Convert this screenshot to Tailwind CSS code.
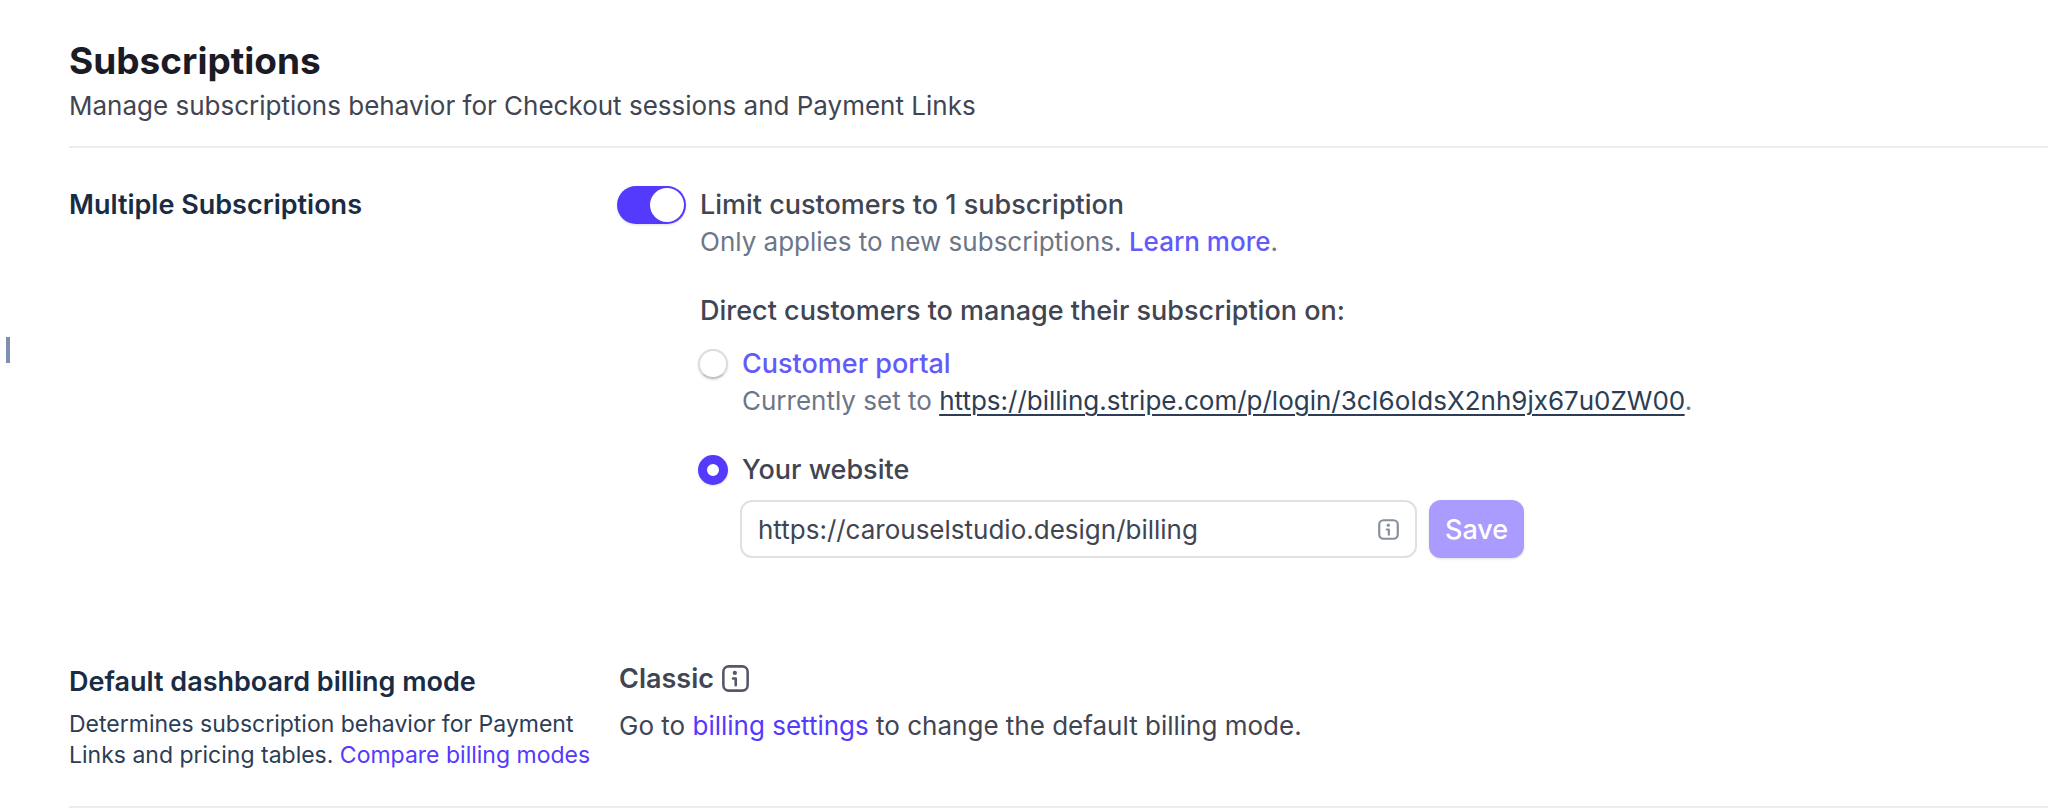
<!DOCTYPE html>
<html lang="en">
<head>
    <meta charset="UTF-8">
    <meta name="viewport" content="width=device-width, initial-scale=1.0">
    <title>Subscriptions</title>
    <script src="https://cdn.jsdelivr.net/npm/@tailwindcss/browser@4"></script>
</head>
<body class="bg-white font-['Inter',sans-serif] text-[27px] leading-[37px] text-[#414552]">
    <!-- Sidebar drag handle -->
    <div class="absolute left-1.5 top-[337px] h-[26px] w-1 bg-[#7f8fad]"></div>

    <main class="pl-[69px] pt-9">
        <header class="border-b-2 border-[#ebeef1] pb-[22px]">
            <h1 class="text-[37px] leading-[50px] font-bold text-[#1a1b25]">Subscriptions</h1>
            <p class="mt-px text-[26px]">Manage subscriptions behavior for Checkout sessions and Payment Links</p>
        </header>

        <section class="flex pt-[38px]">
            <h2 class="w-[548px] shrink-0 font-semibold text-[#1a2c44]">Multiple Subscriptions</h2>
            <div class="flex gap-[14px]">
                <input type="checkbox" id="limit" checked class="flex h-[38px] w-[69px] shrink-0 cursor-pointer appearance-none items-center rounded-full bg-[#c0c8d2] px-[2px] shadow-sm before:size-[34px] before:rounded-full before:bg-white before:content-[''] checked:justify-end checked:bg-[#533afd]">
                <div>
                    <label for="limit" class="block font-medium">Limit customers to 1 subscription</label>
                    <p class="text-[26px] text-[#6c7688]">Only applies to new subscriptions. <a href="#" class="font-medium text-[#625afa]">Learn more</a>.</p>

                    <fieldset class="mt-8">
                        <legend class="font-medium">Direct customers to manage their subscription on:</legend>
                        <div class="mt-4 flex gap-[14px]">
                            <input type="radio" name="manage" id="portal" aria-label="Customer portal" class="-ml-[2px] mt-1 size-[30px] shrink-0 appearance-none rounded-full border-2 border-[#dcdcdc] border-b-[#c4c4c4] bg-white shadow-sm checked:border-9 checked:border-[#533afd]">
                            <div>
                                <a href="#" class="block font-medium text-[#625afa]">Customer portal</a>
                                <p class="text-[26px] text-[#6c7688]">Currently set to <a href="#" class="text-[#2c3d55] underline decoration-2 underline-offset-4">https://billing.stripe.com/p/login/3cI6oIdsX2nh9jx67u0ZW00</a>.</p>
                            </div>
                        </div>
                        <div class="mt-8 flex gap-[14px]">
                            <input type="radio" name="manage" id="website" checked class="-ml-[2px] mt-1 size-[30px] shrink-0 appearance-none rounded-full border-2 border-[#dcdcdc] border-b-[#c4c4c4] bg-white shadow-sm checked:border-9 checked:border-[#533afd]">
                            <label for="website" class="font-medium">Your website</label>
                        </div>
                        <div class="mt-3 flex gap-3 pl-10">
                            <div class="flex h-[58px] w-[677px] items-center rounded-xl border-2 border-[#e0e0e0] px-4">
                                <input type="text" aria-label="Website URL" value="https://carouselstudio.design/billing" class="min-w-0 flex-1 text-[26px] outline-none">
                                <svg class="size-[21px]" viewBox="0 0 12 12" fill="none" stroke="#87909f" stroke-width="1.25" stroke-linecap="round" stroke-linejoin="round">
                                    <rect x="0.7" y="0.7" width="10.6" height="10.6" rx="2.4"></rect>
                                    <circle cx="5.9" cy="3.5" r="0.95" fill="#87909f" stroke="none"></circle>
                                    <path d="M5 6h1.2v3"></path>
                                </svg>
                            </div>
                            <button type="button" class="h-[58px] rounded-xl bg-[#a99cfe] px-4 font-medium text-white shadow-sm">Save</button>
                        </div>
                    </fieldset>
                </div>
            </div>
        </section>

        <section class="mt-[102px] flex border-b-2 border-[#ebeef1] pb-[35px]">
            <div class="w-[550px] shrink-0 pt-[3px]">
                <h2 class="font-semibold text-[#1a2c44]">Default dashboard billing mode</h2>
                <p class="mt-[9px] text-[23px] leading-[31px] text-[#2c3d55]">Determines subscription behavior for Payment<br>Links and pricing tables. <a href="#" class="text-[#533afd]">Compare billing modes</a></p>
            </div>
            <div>
                <h3 class="flex items-center gap-2 font-semibold">
                    Classic
                    <svg class="size-[27px]" viewBox="0 0 12 12" fill="none" stroke="#545969" stroke-width="1.15" stroke-linecap="round" stroke-linejoin="round">
                        <rect x="0.6" y="0.6" width="10.8" height="10.8" rx="2.4"></rect>
                        <circle cx="5.7" cy="3.5" r="0.95" fill="#545969" stroke="none"></circle>
                        <path d="M4.9 6h1.2v3"></path>
                    </svg>
                </h3>
                <p class="mt-[10px] text-[26px]">Go to <a href="#" class="text-[#533afd]">billing settings</a> to change the default billing mode.</p>
            </div>
        </section>
    </main>
</body>
</html>
